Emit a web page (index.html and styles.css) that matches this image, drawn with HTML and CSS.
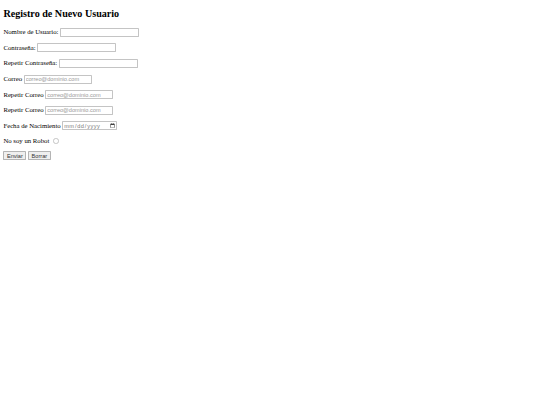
FILE: index.html
```html
<!DOCTYPE html>
<html lang="es">
<head>
<meta charset="utf-8">
<title>Registro de Nuevo Usuario</title>
<link rel="stylesheet" href="styles.css">
</head>
<body>
<h2 class="title">Registro de Nuevo Usuario</h2>
<form class="form">
<p class="row"><label>Nombre de Usuario: <input type="text" class="field field-text"></label></p>
<p class="row"><label>Contraseña: <input type="password" class="field field-text"></label></p>
<p class="row"><label>Repetir Contraseña: <input type="password" class="field field-text"></label></p>
<p class="row"><label>Correo <input type="email" class="field field-email" placeholder="correo@dominio.com"></label></p>
<p class="row"><label>Repetir Correo <input type="email" class="field field-email" placeholder="correo@dominio.com"></label></p>
<p class="row"><label>Repetir Correo <input type="email" class="field field-email" placeholder="correo@dominio.com"></label></p>
<p class="row"><label>Fecha de Nacimiento <input type="date" class="field field-date"></label></p>
<p class="row"><label>No soy un Robot <input type="radio" class="robot"></label></p>
<p class="row"><input type="submit" class="btn" value="Enviar"> <input type="reset" class="btn" value="Borrar"></p>
</form>
</body>
</html>
```
FILE: styles.css
```css
html {
  zoom: 0.421875;
}
body {
  width: max-content;
  font-family: "Liberation Serif", "Times New Roman", serif;
  color: #000;
}
.title {
  margin-top: 12px;
}
.field,
.btn {
  font-family: "Liberation Sans", Arial, sans-serif;
}
.field {
  box-sizing: border-box;
  height: 21px;
  border: 1px solid #c4c4c4;
  border-radius: 2px;
  background: #fff;
}
.field-text {
  width: 187px;
}
.field-email {
  width: 161px;
}
.field-date {
  width: 130px;
}
.field-date::-webkit-datetime-edit {
  color: #777;
  letter-spacing: 1px;
}
.field::placeholder {
  color: #999;
}
.robot {
  appearance: none;
  box-sizing: border-box;
  width: 13px;
  height: 13px;
  margin: 3px 3px 0 5px;
  border: 1px solid #c4c4c4;
  border-radius: 50%;
  background: #fff;
  vertical-align: -1px;
}
.btn {
  border: 1px solid #b4b4b4;
  border-radius: 2px;
  background: #efefef;
  color: #333;
  padding: 1px 6px;
}
```
